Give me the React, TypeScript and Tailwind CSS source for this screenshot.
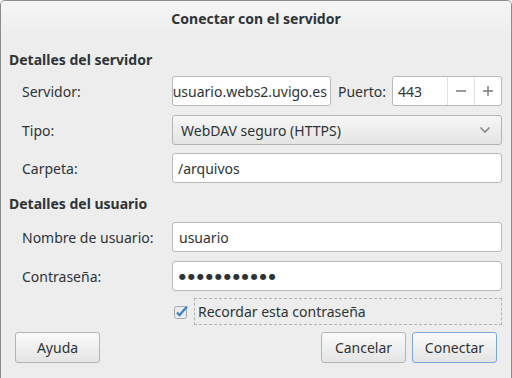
import React from "react";

const font = { fontFamily: '"Noto Sans", "DejaVu Sans", sans-serif' };

const Label = ({ children }: { children: React.ReactNode }) => (
  <div className="w-[163px] shrink-0 pl-[13px] text-[14px] text-[#2e3436]">{children}</div>
);

const TextBox = ({ value, className = "" }: { value: React.ReactNode; className?: string }) => (
  <div
    className={`h-[30px] flex items-center px-[6px] bg-white border border-[#b8b8b5] rounded-[3px] text-[14px] text-[#2e3436] overflow-hidden whitespace-nowrap ${className}`}
  >
    {value}
  </div>
);

const Button = ({ label, focused = false }: { label: string; focused?: boolean }) => (
  <div
    className={`w-[85px] h-[31px] flex items-center justify-center rounded-[3px] border text-[14px] text-[#2e3436] bg-gradient-to-b from-[#fafafa] to-[#e4e4e4] ${
      focused ? "border-[#7ba6d8]" : "border-[#b4b4b1]"
    }`}
  >
    {label}
  </div>
);

export default function App() {
  return (
    <div
      className="w-[512px] h-[378px] bg-[#ededed] border-x border-t border-[#8c8c8c] rounded-t-[5px] overflow-hidden text-[#2e3436]"
      style={font}
    >
      {/* title bar */}
      <div className="h-[35px] flex items-center justify-center bg-gradient-to-b from-[#f6f6f6] to-[#ededed] text-[14px] font-bold">
        Conectar con el servidor
      </div>

      <div className="pl-[8px] pr-[9px]">
        <div className="mt-[15px] h-[18px] leading-[18px] text-[14px] font-bold">Detalles del servidor</div>

        <div className="mt-[7px] flex items-center">
          <Label>Servidor:</Label>
          <TextBox value="usuario.webs2.uvigo.es" className="w-[160px] justify-end pr-[3px]" />
          <div className="ml-[7px] text-[14px]">Puerto:</div>
          <div className="ml-[6px] w-[110px] shrink-0 h-[30px] flex bg-white border border-[#b8b8b5] rounded-[3px] text-[14px]">
            <div className="flex-1 flex items-center pl-[5px]">443</div>
            <div className="w-[27px] flex items-center justify-center border-l border-[#e2e2e2]">
              <svg width="12" height="12" viewBox="0 0 12 12">
                <path d="M1 6h10" stroke="#7a7a7a" strokeWidth="1.4" />
              </svg>
            </div>
            <div className="w-[27px] flex items-center justify-center border-l border-[#e2e2e2]">
              <svg width="12" height="12" viewBox="0 0 12 12">
                <path d="M1 6h10M6 1v10" stroke="#7a7a7a" strokeWidth="1.4" />
              </svg>
            </div>
          </div>
        </div>

        <div className="mt-[9px] flex items-center">
          <Label>Tipo:</Label>
          <div className="flex-1 h-[30px] flex items-center justify-between pl-[8px] pr-[10px] rounded-[3px] border border-[#b4b4b1] bg-gradient-to-b from-[#f7f7f7] to-[#e4e4e4] text-[14px]">
            <span>WebDAV seguro (HTTPS)</span>
            <svg width="12" height="8" viewBox="0 0 12 8">
              <path d="M1.5 1.5 6 6l4.5-4.5" fill="none" stroke="#8a8a8a" strokeWidth="1.6" />
            </svg>
          </div>
        </div>

        <div className="mt-[8px] flex items-center">
          <Label>Carpeta:</Label>
          <TextBox value="/arquivos" className="flex-1 pl-[5px]" />
        </div>

        <div className="mt-[12px] h-[18px] leading-[18px] text-[14px] font-bold">Detalles del usuario</div>

        <div className="mt-[9px] flex items-center">
          <Label>Nombre de usuario:</Label>
          <TextBox value="usuario" className="flex-1" />
        </div>

        <div className="mt-[9px] flex items-center">
          <Label>Contraseña:</Label>
          <TextBox
            value={<span className="text-[8px] tracking-[2px] text-[#2e3436]">●●●●●●●●●●●</span>}
            className="flex-1"
          />
        </div>

        <div className="mt-[7px] flex items-center pl-[164px]">
          <svg width="16" height="16" viewBox="0 0 16 16" className="shrink-0">
            <rect x="1.5" y="2.5" width="12" height="12" rx="2" fill="#e9ecef" stroke="#a7aaad" />
            <path d="M4 8.5l2.5 2.8L14 2.5" fill="none" stroke="#3d7fd0" strokeWidth="2.2" strokeLinejoin="round" />
          </svg>
          <div className="ml-[5px] flex-1 h-[27px] flex items-center pl-[3px] border border-dashed border-[#b3b3b3] text-[14px]">
            Recordar esta contraseña
          </div>
        </div>

        <div className="mt-[7px] flex items-center pl-[6px] pr-[5px]">
          <Button label="Ayuda" />
          <div className="flex-1" />
          <Button label="Cancelar" />
          <div className="w-[6px]" />
          <Button label="Conectar" focused />
        </div>
      </div>
    </div>
  );
}
